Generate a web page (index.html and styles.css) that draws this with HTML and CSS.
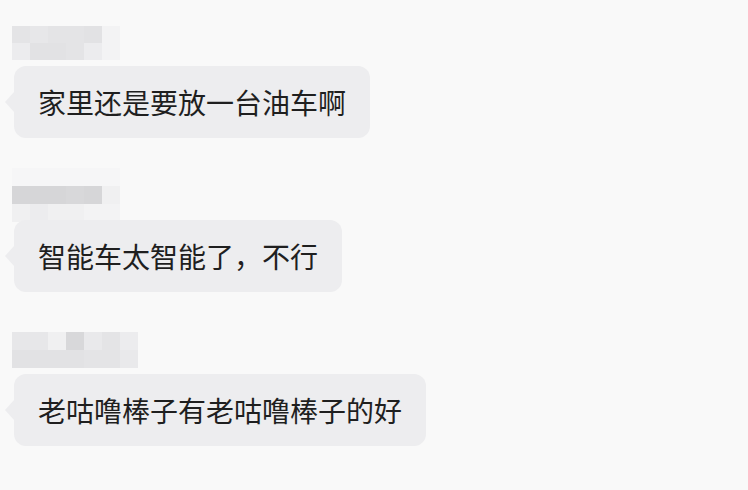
FILE: index.html
```html
<!DOCTYPE html>
<html lang="zh-CN">
<head>
    <meta charset="UTF-8">
    <meta name="viewport" content="width=device-width, initial-scale=1.0">
    <title>评论</title>
    <link rel="stylesheet" href="styles.css">
</head>
<body>
    <div class="chat">
        <div class="msg">
            <div class="name">
                <span class="g3"></span><span class="g4"></span><span class="g3"></span><span class="g3"></span><span class="g2"></span><span class="g8"></span>
                <span class="g6"></span><span class="g2"></span><span class="g2"></span><span class="g3"></span><span class="g6"></span><span class="g8"></span>
            </div>
            <div class="bubble">家里还是要放一台油车啊</div>
        </div>
        <div class="msg">
            <div class="name three">
                <span class="g9"></span><span class="g9"></span><span class="g9"></span><span class="g9"></span><span class="g9"></span><span class="g9"></span>
                <span class="g0"></span><span class="g0"></span><span class="g0"></span><span class="g1"></span><span class="g0"></span><span class="g7"></span>
                <span class="g7"></span><span class="g6"></span><span class="g7"></span><span class="g7"></span><span class="g8"></span><span class="g8"></span>
            </div>
            <div class="bubble">智能车太智能了，不行</div>
        </div>
        <div class="msg">
            <div class="name seven">
                <span class="g4"></span><span class="g4"></span><span class="g7"></span><span class="g1"></span><span class="g5"></span><span class="g3"></span><span class="g6"></span>
                <span class="g2"></span><span class="g2"></span><span class="g2"></span><span class="g2"></span><span class="g3"></span><span class="g3"></span><span class="g5"></span>
            </div>
            <div class="bubble">老咕噜棒子有老咕噜棒子的好</div>
        </div>
    </div>
</body>
</html>
```
FILE: styles.css
```css
* {
    margin: 0;
    padding: 0;
    box-sizing: border-box;
}
body {
    background: #f9f9f9;
    font-family: "Noto Sans CJK SC", "Noto Sans", sans-serif;
    color: #1f1f1f;
}
.chat {
    padding: 26px 0 0 14px;
}
.msg {
    display: flex;
    flex-direction: column;
    align-items: flex-start;
    margin-bottom: 42px;
}
.name {
    display: grid;
    grid-template-columns: repeat(6, 18px);
    grid-auto-rows: 17px;
    margin-left: -2px;
    margin-bottom: 6px;
}
.name.three {
    grid-auto-rows: 18px;
    margin-top: -12px;
    margin-bottom: -2px;
}
.name.seven {
    grid-template-columns: repeat(7, 18px);
    grid-auto-rows: 18px;
    margin-top: -2px;
    margin-bottom: 6px;
}
.g0 { background: #d6d6d8; }
.g1 { background: #d8d8da; }
.g2 { background: #e2e2e4; }
.g3 { background: #e4e4e6; }
.g4 { background: #e7e7e9; }
.g5 { background: #e9e9eb; }
.g6 { background: #ececee; }
.g7 { background: #f0f0f1; }
.g8 { background: #f3f3f4; }
.g9 { background: #f6f6f7; }
.bubble {
    position: relative;
    background: #ededef;
    border-radius: 12px;
    padding: 16px 24px;
    font-size: 28px;
    line-height: 40px;
    white-space: nowrap;
}
.bubble::before {
    content: "";
    position: absolute;
    left: -9px;
    top: 26px;
    border-top: 10px solid transparent;
    border-bottom: 10px solid transparent;
    border-right: 9px solid #ededef;
}
```
